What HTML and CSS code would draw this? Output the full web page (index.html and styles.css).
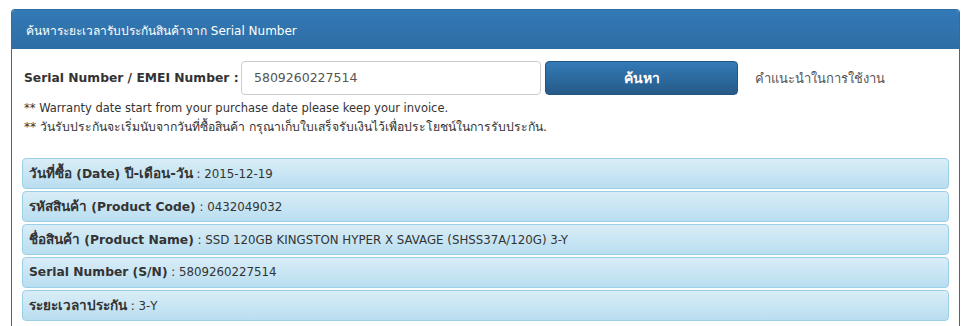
FILE: index.html
```html
<!DOCTYPE html>
<html lang="th">
<head>
<meta charset="utf-8">
<title>Warranty</title>
<link rel="stylesheet" href="styles.css">
</head>
<body>
<div class="panel">
  <div class="panel-heading">ค้นหาระยะเวลารับประกันสินค้าจาก Serial Number</div>
  <div class="panel-body">
    <div class="search">
      <label class="label">Serial Number / EMEI Number :</label>
      <div class="input">5809260227514</div>
      <button class="btn">ค้นหา</button>
      <span class="help">คำแนะนำในการใช้งาน</span>
    </div>
    <p class="note note-en">** Warranty date start from your purchase date please keep your invoice.</p>
    <p class="note note-th">** วันรับประกันจะเริ่มนับจากวันที่ซื้อสินค้า กรุณาเก็บใบเสร็จรับเงินไว้เพื่อประโยชน์ในการรับประกัน.</p>
    <div class="rows">
      <div class="row"><b><span class="th">วันที่ซื้อ</span> (Date) <span class="th">ปี-เดือน-วัน</span></b> : 2015-12-19</div>
      <div class="row"><b><span class="th">รหัสสินค้า</span> (Product Code)</b> : 0432049032</div>
      <div class="row"><b><span class="th">ชื่อสินค้า</span> (Product Name)</b> : SSD 120GB KINGSTON HYPER X SAVAGE (SHSS37A/120G) 3-Y</div>
      <div class="row"><b>Serial Number (S/N)</b> : 5809260227514</div>
      <div class="row"><b><span class="th">ระยะเวลาประกัน</span></b> : 3-Y</div>
    </div>
  </div>
</div>
</body>
</html>
```
FILE: styles.css
```css
html, body { margin: 0; padding: 0; background: #fff; }
body {
  font-family: Tahoma, "DejaVu Sans", "Noto Sans", sans-serif;
  font-size: 12px;
  color: #333;
  overflow: hidden;
  height: 326px;
}
.panel {
  margin: 9px 20px 0 11px;
  border: 1px solid #2e6da4;
  border-bottom: none;
  border-radius: 4px 4px 0 0;
  height: 317px;
  box-sizing: border-box;
  overflow: hidden;
}
.panel-heading {
  height: 40px;
  box-sizing: border-box;
  padding: 12px 15px 0;
  color: #fff;
  font-size: 12px;
  background: linear-gradient(to bottom, #337ab7 0%, #2e6da4 100%);
  border-radius: 3px 3px 0 0;
  margin: -1px -1px 0;
}
.panel-body {
  padding: 12px 10px 0;
}
.search {
  display: flex;
  align-items: center;
  height: 34px;
  padding-left: 2px;
}
.label {
  font-weight: bold;
  font-size: 12.3px;
  width: 217px;
  white-space: nowrap;
}
.input {
  width: 300px;
  height: 34px;
  box-sizing: border-box;
  border: 1px solid #ccc;
  border-radius: 4px;
  padding: 0 12px;
  line-height: 32px;
  font-size: 12.5px;
  color: #555;
}
.btn {
  margin-left: 4px;
  width: 193px;
  height: 34px;
  border: 1px solid #245580;
  border-radius: 4px;
  background: linear-gradient(to bottom, #337ab7 0%, #265a88 100%);
  color: #fff;
  font-family: inherit;
  font-size: 14px;
  font-weight: bold;
}
.help {
  margin-left: 17px;
  color: #555;
  font-size: 13px;
}
.note {
  margin: 0;
  padding-left: 2px;
  line-height: 19px;
}
.note-en { margin-top: 4px; font-size: 11.5px; }
.note-th { font-size: 12.2px; }
.rows {
  margin-top: 21px;
  display: flex;
  flex-direction: column;
  gap: 2px;
}
.row {
  height: 31px;
  flex: none;
  box-sizing: border-box;
  border: 1px solid #9acfea;
  border-radius: 4px;
  background: linear-gradient(to bottom, #d9edf7 0%, #b9def0 100%);
  padding: 0 6px;
  line-height: 29px;
  font-size: 11.8px;
  white-space: nowrap;
}
.row b { font-size: 12.3px; }
.row .th { font-size: 13.5px; }
```
